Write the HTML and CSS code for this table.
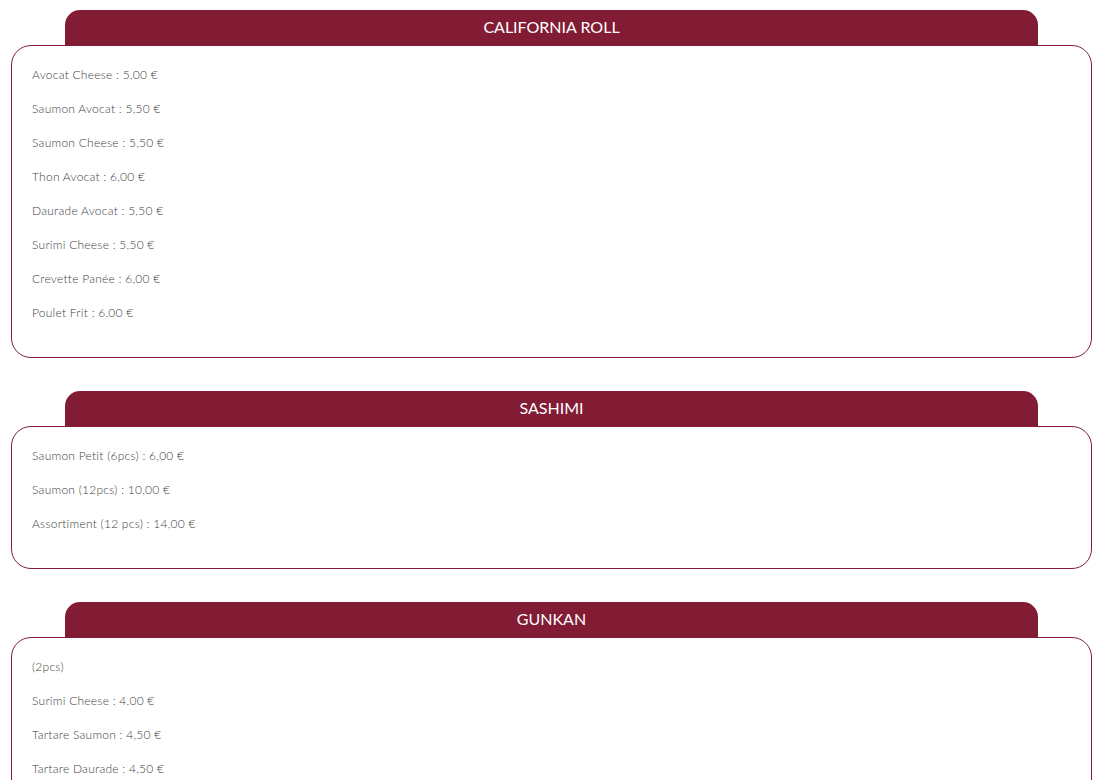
FILE: index.html
```html
<!DOCTYPE html>
<html lang="fr">
<head>
<meta charset="utf-8">
<title>Menu</title>
<link rel="stylesheet" href="styles.css">
</head>
<body>
<div class="menu">
  <section class="cat">
    <h2 class="tab">CALIFORNIA ROLL</h2>
    <div class="box">
      <p>Avocat Cheese : 5,00 €</p>
      <p>Saumon Avocat : 5,50 €</p>
      <p>Saumon Cheese : 5,50 €</p>
      <p>Thon Avocat : 6,00 €</p>
      <p>Daurade Avocat : 5,50 €</p>
      <p>Surimi Cheese : 5,50 €</p>
      <p>Crevette Panée : 6,00 €</p>
      <p>Poulet Frit : 6,00 €</p>
    </div>
  </section>
  <section class="cat">
    <h2 class="tab">SASHIMI</h2>
    <div class="box">
      <p>Saumon Petit (6pcs) : 6,00 €</p>
      <p>Saumon (12pcs) : 10,00 €</p>
      <p>Assortiment (12 pcs) : 14,00 €</p>
    </div>
  </section>
  <section class="cat">
    <h2 class="tab">GUNKAN</h2>
    <div class="box">
      <p>(2pcs)</p>
      <p>Surimi Cheese : 4,00 €</p>
      <p>Tartare Saumon : 4,50 €</p>
      <p>Tartare Daurade : 4,50 €</p>
    </div>
  </section>
</div>
</body>
</html>
```
FILE: styles.css
```css
html, body {
  margin: 0;
  padding: 0;
  background: #ffffff;
}
body {
  font-family: "Lato", "Noto Sans", sans-serif;
}
.menu {
  width: 1081px;
  padding: 10px 0 0 11px;
  display: flex;
  flex-direction: column;
  gap: 33px;
}
.cat {
  display: flex;
  flex-direction: column;
}
.tab {
  margin: 0 54px;
  height: 35px;
  background: #821b34;
  border-radius: 15px 15px 0 0;
  color: #ffffff;
  font-size: 16px;
  font-weight: 400;
  line-height: 33px;
  text-align: center;
}
.box {
  border: 1px solid #821b34;
  border-radius: 20px;
  padding: 20px 20px 35px 20px;
  display: flex;
  flex-direction: column;
  gap: 16px;
}
.box p {
  margin: 0;
  line-height: 18px;
  font-size: 12px;
  font-weight: 300;
  letter-spacing: 0.25px;
  color: #3f3f3f;
}
```
